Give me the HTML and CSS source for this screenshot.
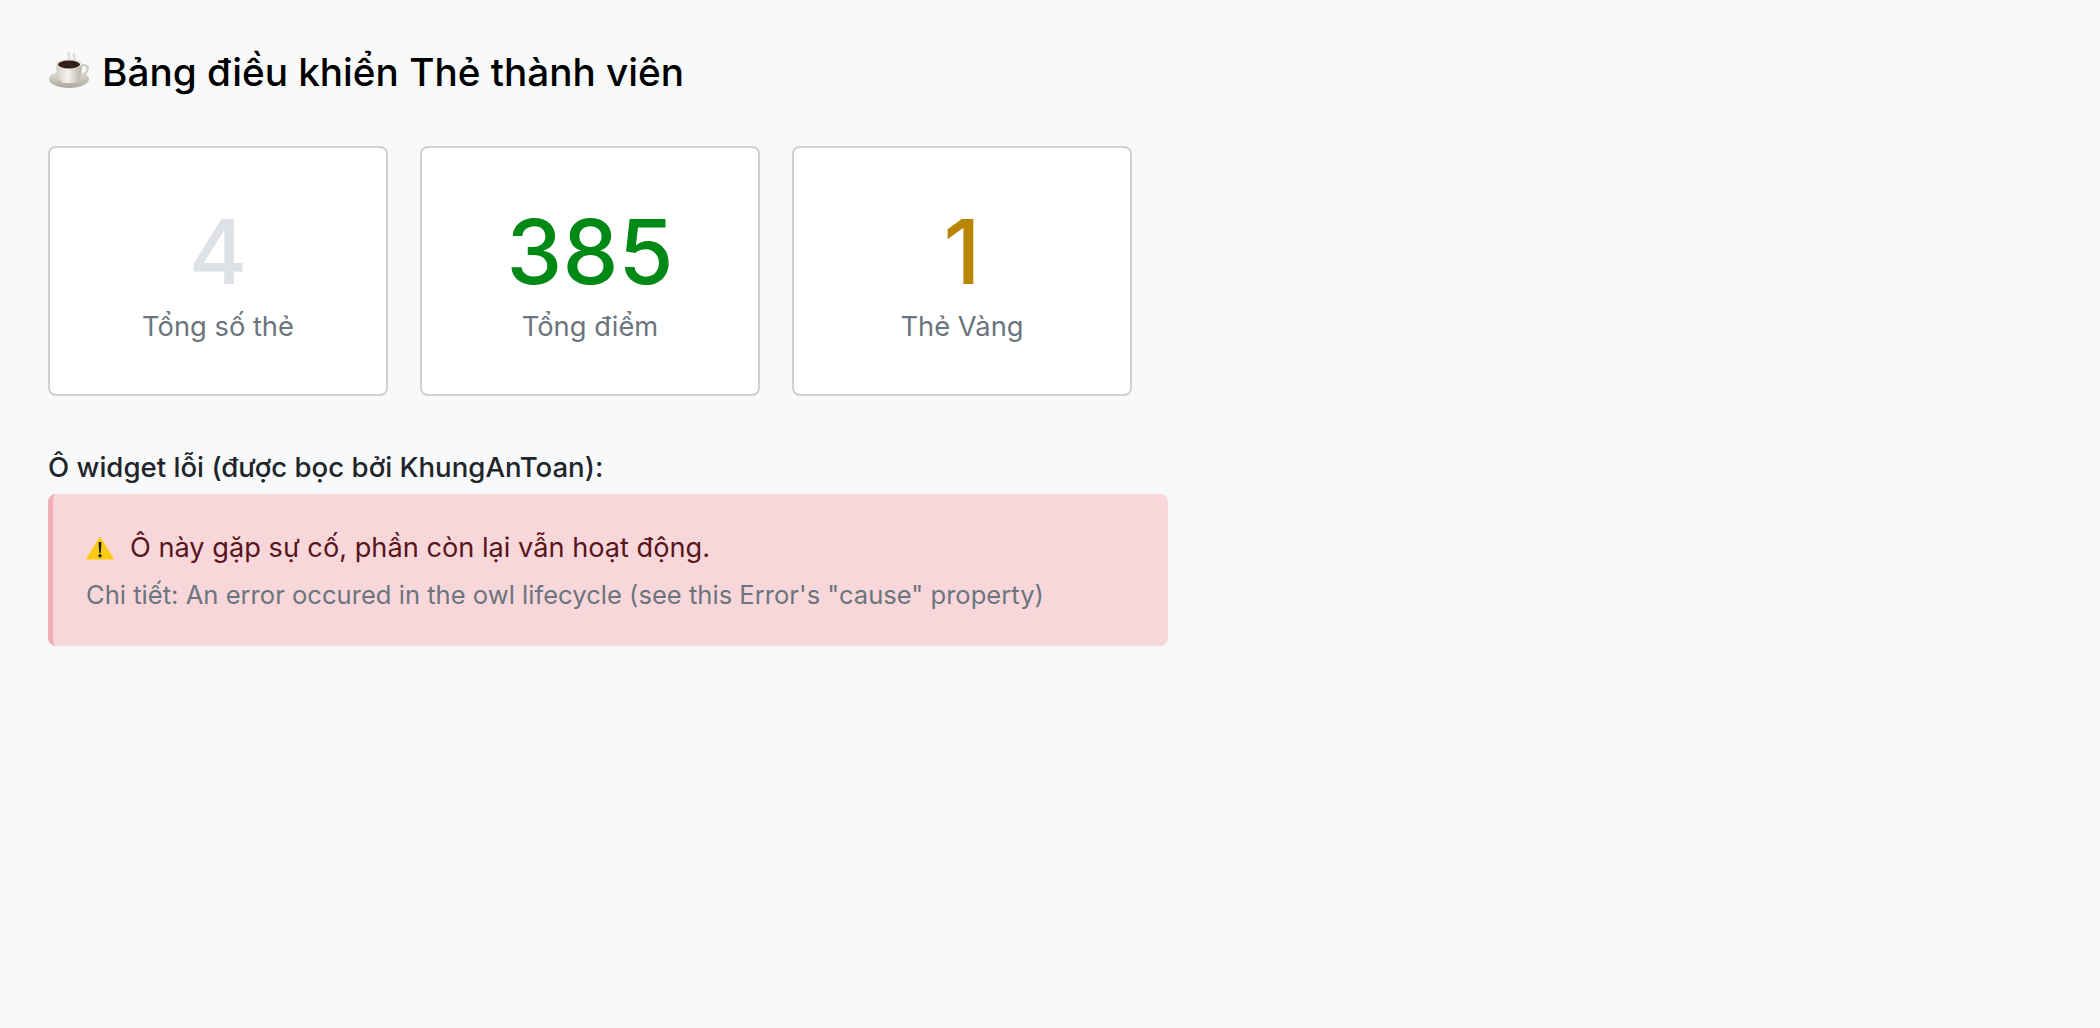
FILE: index.html
```html
<!DOCTYPE html>
<html lang="vi">
<head>
<meta charset="utf-8">
<title>Bảng điều khiển Thẻ thành viên</title>
<link rel="stylesheet" href="styles.css">
</head>
<body>
<main class="page">
  <h1 class="title">
    <svg class="cup" viewBox="0 0 44 44" aria-hidden="true">
      <defs>
        <linearGradient id="cupBody" x1="0" x2="1" y1="0" y2="0"><stop offset="0" stop-color="#cfccc3"/><stop offset=".45" stop-color="#f5f3ee"/><stop offset="1" stop-color="#b5b1a6"/></linearGradient>
        <linearGradient id="saucer" x1="0" x2="0" y1="0" y2="1"><stop offset="0" stop-color="#e9e7e0"/><stop offset="1" stop-color="#a9a69a"/></linearGradient>
      </defs>
      <path d="M21 3c-3 2 2 3 0 6M26 4c-2 2 2 3 0 5" fill="none" stroke="#dedede" stroke-width="2.400" stroke-linecap="round"/>
      <ellipse cx="21" cy="29" rx="20" ry="9" fill="url(#saucer)"/>
      <path d="M33 16c6-3 8 2 6 5-1 3-4 5-8 6" fill="none" stroke="#cfccc2" stroke-width="2.200"/>
      <path d="M8 14h26c0 8-2 16-7 19H15C10 30 8 22 8 14z" fill="url(#cupBody)"/>
      <ellipse cx="21" cy="14" rx="13" ry="5" fill="#e8e6df"/>
      <ellipse cx="21" cy="14.500" rx="11" ry="4" fill="#33201a"/>
    </svg>
    <span>Bảng điều khiển Thẻ thành viên</span>
  </h1>
  <section class="stats">
    <article class="card"><div class="num num-gray">4</div><div class="label">Tổng số thẻ</div></article>
    <article class="card"><div class="num num-green">385</div><div class="label">Tổng điểm</div></article>
    <article class="card"><div class="num num-gold">1</div><div class="label">Thẻ Vàng</div></article>
  </section>
  <p class="caption">Ô widget lỗi (được bọc bởi KhungAnToan):</p>
  <section class="error">
    <div class="error-title">
      <svg class="warn" viewBox="0 0 28 24" aria-hidden="true">
        <path d="M14 1 L27.500 23 H0.500 Z" fill="#fdcb10" stroke="#fdcb10" stroke-linejoin="round"/>
        <path d="M12.600 6h2.800l-.6 11h-1.600z" fill="#1c1c1c"/>
        <circle cx="14" cy="19.800" r="1.700" fill="#1c1c1c"/>
      </svg>
      <span>Ô này gặp sự cố, phần còn lại vẫn hoạt động.</span>
    </div>
    <div class="error-detail">Chi tiết: An error occured in the owl lifecycle (see this Error's "cause" property)</div>
  </section>
</main>
</body>
</html>
```
FILE: styles.css
```css
* { box-sizing: border-box; }
html, body { margin: 0; height: 100%; }
body {
  background: #f8f9fa;
  font-family: Inter, "Noto Sans", sans-serif;
  color: #212529;
}
.page { padding: 48px; }
.title {
  display: flex;
  align-items: center;
  gap: 10px;
  margin: 0 0 50px;
  font-size: 38.700px;
  line-height: 48px;
  font-weight: 500;
  color: #000;
}
.cup { width: 44px; height: 44px; }
.stats { display: flex; gap: 32px; margin-bottom: 51px; }
.card {
  width: 340px;
  height: 250px;
  padding-top: 54px;
  background: #fff;
  border: 2px solid #ced0d2;
  border-radius: 8px;
  text-align: center;
}
.num { font-size: 89px; line-height: 100px; font-weight: 500; }
.num-gray { color: #dee2e6; }
.num-green { color: #008a15; }
.num-gold { color: #b88600; }
.label { font-size: 27.300px; line-height: 40px; color: #6c757d; margin-top: 5px; }
.caption {
  margin: 0 0 7px;
  font-size: 27.600px;
  line-height: 40px;
  font-weight: 500;
  color: #212529;
}
.error {
  width: 1120px;
  height: 152px;
  padding: 29px 33px 0;
  background: #f8d7da;
  border-left: 5px solid #f1aeb5;
  border-radius: 8px;
}
.error-title {
  display: flex;
  align-items: center;
  gap: 16px;
  font-size: 27.200px;
  line-height: 50px;
  color: #58151c;
}
.warn { width: 28px; height: 24px; }
.error-detail { font-size: 25.600px; line-height: 44px; color: #6c757d; }
```
